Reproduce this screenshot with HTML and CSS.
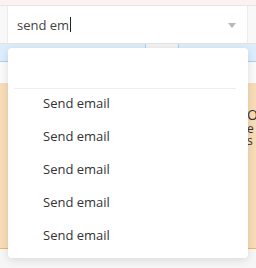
FILE: index.html
```html
<!DOCTYPE html>
<html>
<head>
<meta charset="utf-8">
<link rel="stylesheet" href="styles.css">
</head>
<body>
<div class="page">
  <div class="topbar"></div>
  <div class="field-row">
    <div class="gutter"></div>
    <div class="field">
      <span class="value">send em</span><span class="caret"></span>
      <span class="arrow"></span>
    </div>
    <div class="gutter right"></div>
  </div>
  <div class="tabs">
    <div class="tab wide"></div>
    <div class="tab-gap"></div>
    <div class="tab"></div>
  </div>
  <div class="spacer"></div>
  <div class="panel">
    <div class="panel-text">
      <div class="t1">O</div>
      <div class="t2">e</div>
      <div class="t3">s</div>
    </div>
  </div>
</div>
<div class="menu">
  <div class="menu-head"></div>
  <div class="menu-sep"></div>
  <ul class="menu-list">
    <li class="menu-item">Send email</li>
    <li class="menu-item">Send email</li>
    <li class="menu-item">Send email</li>
    <li class="menu-item">Send email</li>
    <li class="menu-item">Send email</li>
  </ul>
</div>
</body>
</html>
```
FILE: styles.css
```css
* { box-sizing: border-box; }
html, body { margin: 0; padding: 0; }
body {
  width: 256px;
  height: 268px;
  overflow: hidden;
  background: #f6f6f6;
  font-family: "Open Sans", "Noto Sans", sans-serif;
  position: relative;
}
.topbar {
  height: 6px;
  background: #fbf2f4;
  border-bottom: 1px solid #eee2e5;
}
.field-row {
  display: flex;
  height: 38px;
  border-bottom: 1px solid #e3e3e3;
}
.gutter {
  width: 8px;
  background: #f8f8f8;
  border-right: 1px solid #ececec;
}
.gutter.right {
  width: 9px;
  border-right: none;
  border-left: 1px solid #ececec;
}
.field {
  flex: 1;
  background: #fff;
  display: flex;
  align-items: center;
  padding-left: 9px;
  position: relative;
  font-size: 13px;
  color: #444;
}
.caret {
  display: inline-block;
  width: 1px;
  height: 15px;
  background: #222;
  margin-left: 1px;
}
.arrow {
  position: absolute;
  right: 11px;
  top: 17px;
  width: 0;
  height: 0;
  border-left: 4px solid transparent;
  border-right: 4px solid transparent;
  border-top: 5px solid #b8b8b8;
}
.tabs {
  display: flex;
  height: 18px;
}
.tab {
  flex: 1;
  background: #dcedfb;
  border-bottom: 1px solid #a8d2f2;
}
.tab.wide { flex: 0 0 146px; border-right: 1px solid #a8d2f2; }
.tab-gap {
  flex: 0 0 33px;
  background: #f2f2f2;
  border-right: 1px solid #a8d2f2;
}
.spacer {
  height: 21px;
  background: #fafafa;
}
.panel {
  height: 166px;
  background: #f8dcb8;
  border-bottom: 1px solid #f3b55c;
  position: relative;
  overflow: hidden;
}
.panel-text {
  position: absolute;
  left: 247px;
  top: 24px;
  color: #333;
}
.panel-text .t1 { font-size: 14px; line-height: 16px; }
.panel-text .t2,
.panel-text .t3 { font-size: 12px; line-height: 12px; }
.menu {
  position: absolute;
  left: 8px;
  top: 48px;
  width: 240px;
  height: 210px;
  background: #fff;
  border-radius: 4px;
  box-shadow: 0 2px 8px rgba(0,0,0,0.12);
}
.menu-head { height: 40px; }
.menu-sep {
  height: 1px;
  margin: 0 12px 0 6px;
  background: #eeeeee;
}
.menu-list {
  list-style: none;
  margin: -2px 0 0 0;
  padding: 0;
}
.menu-item {
  height: 33px;
  line-height: 33px;
  padding-left: 35px;
  font-size: 13px;
  color: #333;
}
```
